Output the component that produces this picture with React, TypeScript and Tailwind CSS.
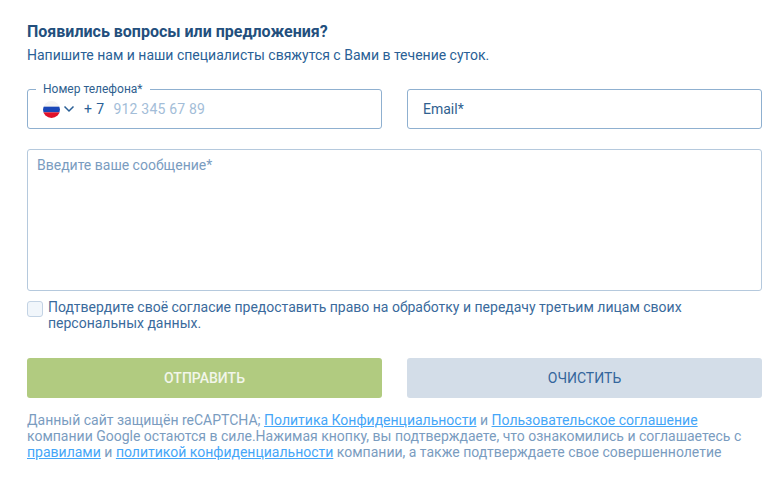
export default function App() {
  return (
    <div className="w-[782px] h-[480px] overflow-hidden bg-white pl-[27px] pr-[20px] pt-[22px] font-['Roboto',sans-serif] text-[#2a5f96]">
      <h2 className="text-[16px] leading-[20px] font-bold text-[#234f7d]">Появились вопросы или предложения?</h2>
      <p className="mt-[3px] text-[14px] leading-[20px]">
        Напишите нам и наши специалисты свяжутся с Вами в течение суток.
      </p>

      <div className="mt-[24px] grid grid-cols-2 gap-[25px]">
        <div className="relative flex h-[40px] items-center rounded-[3px] border border-[#8fb0d0] pl-[15px]">
          <span className="absolute left-[8px] top-[-9px] bg-white px-[7px] text-[12px] leading-[16px] text-[#2f5f8f]">
            Номер телефона*
          </span>
          <svg width="17" height="17" viewBox="0 0 18 18">
            <defs>
              <clipPath id="flag">
                <circle cx="9" cy="9" r="9" />
              </clipPath>
            </defs>
            <g clipPath="url(#flag)">
              <rect width="18" height="6" fill="#f4f4f4" />
              <rect y="6" width="18" height="6" fill="#1a47b8" />
              <rect y="12" width="18" height="6" fill="#e0112b" />
            </g>
          </svg>
          <svg width="12" height="8" viewBox="0 0 12 8" className="ml-[3px]" fill="none">
            <path d="M1.5 1.5 6 6l4.5-4.5" stroke="#2a5f96" strokeWidth="1.5" />
          </svg>
          <span className="ml-[9px] text-[14px] tracking-[0.4px] text-[#2a5f96]">+ 7</span>
          <span className="ml-[9px] text-[14px] tracking-[0.2px] text-[#a3bdd8]">912 345 67 89</span>
        </div>
        <div className="flex h-[40px] items-center rounded-[3px] border border-[#8fb0d0] px-[15px] text-[14px] text-[#2f5f8f]">
          Email*
        </div>
      </div>

      <div className="mt-[20px] h-[142px] rounded-[3px] border border-[#b5c9dd] px-[9px] py-[6px] text-[14px] leading-[18px] text-[#7a9cbf]">
        Введите ваше сообщение*
      </div>

      <div className="mt-[8px] flex items-start gap-[5px]">
        <div className="mt-[2px] h-[16px] w-[16px] shrink-0 rounded-[3px] border border-[#c3d3e4] bg-[#f1f6fb]" />
        <p className="text-[14px] leading-[16px] text-[#3a6a9c] w-[680px]">
          Подтвердите своё согласие предоставить право на обработку и передачу третьим лицам своих персональных данных.
        </p>
      </div>

      <div className="mt-[27px] grid grid-cols-2 gap-[25px]">
        <button className="h-[40px] rounded-[3px] bg-[#b1cb80] text-[14px] font-medium text-[#f2f6ea]">ОТПРАВИТЬ</button>
        <button className="h-[40px] rounded-[3px] bg-[#d3dde8] text-[14px] text-[#34669c]">ОЧИСТИТЬ</button>
      </div>

      <p className="mt-[14px] text-[14px] leading-[16px] text-[#7a9cbf]">
        Данный сайт защищён reCAPTCHA; <a className="text-[#45a6f8] underline">Политика Конфиденциальности</a> и{' '}
        <a className="text-[#45a6f8] underline">Пользовательское соглашение</a>
        <br />
        компании Google остаются в силе.Нажимая кнопку, вы подтверждаете, что ознакомились и соглашаетесь с
        <br />
        <a className="text-[#45a6f8] underline">правилами</a> и{' '}
        <a className="text-[#45a6f8] underline">политикой конфиденциальности</a> компании, а также подтверждаете свое совершеннолетие
      </p>
    </div>
  )
}
